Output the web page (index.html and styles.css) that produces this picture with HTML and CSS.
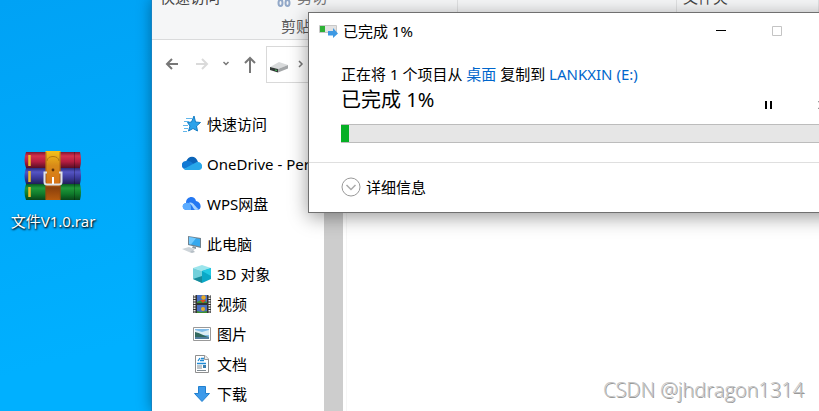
FILE: index.html
```html
<!DOCTYPE html>
<html lang="zh-CN">
<head>
<meta charset="utf-8">
<meta name="viewport" content="width=device-width, initial-scale=1">
<title>已完成 1%</title>
<link rel="stylesheet" href="styles.css">
</head>
<body>
<main class="desktop">
  <a class="shortcut" href="#rar">
    <svg class="shortcut-icon" width="58" height="50" viewBox="0 0 58 50" aria-hidden="true">
      <defs>
        <linearGradient id="red" x2="0" y2="1"><stop offset="0" stop-color="#7e1531"/><stop offset=".25" stop-color="#d5304c"/><stop offset=".6" stop-color="#b51d40"/><stop offset="1" stop-color="#580e25"/></linearGradient>
        <linearGradient id="blue" x2="0" y2="1"><stop offset="0" stop-color="#2c2c7c"/><stop offset=".25" stop-color="#5555c4"/><stop offset=".6" stop-color="#3c3a9c"/><stop offset="1" stop-color="#201f58"/></linearGradient>
        <linearGradient id="green" x2="0" y2="1"><stop offset="0" stop-color="#085b21"/><stop offset=".25" stop-color="#20993a"/><stop offset=".6" stop-color="#107c2c"/><stop offset="1" stop-color="#07461a"/></linearGradient>
        <linearGradient id="strap" x2="0" y2="1"><stop offset="0" stop-color="#f5c21b"/><stop offset=".3" stop-color="#d88a18"/><stop offset=".65" stop-color="#d87418"/><stop offset=".75" stop-color="#8b400c"/><stop offset="1" stop-color="#b75c0f"/></linearGradient>
      </defs>
      <path d="M2 1H56Q58 9 56 17H2Q-1 9 2 1Z" fill="url(#red)"/>
      <path d="M2 17H56Q58 25 56 33H2Q-1 25 2 17Z" fill="url(#blue)"/>
      <path d="M2 33H56Q58 41 56 49H2Q-1 41 2 33Z" fill="url(#green)"/>
      <path d="M5.500 4V15M5.500 20V31M5.500 36V46" stroke="#efbd2b" stroke-width="2.500"/>
      <path d="M50.500 1V49" stroke="#0004"/>
      <path d="M21.500 0H36.500V49H21.500Z" fill="url(#strap)"/>
      <path d="M22 1V48M36 1V48" stroke="#8d4a0f" stroke-opacity=".6"/>
      <path d="M23 10C23 4 35 4 35 10" fill="none" stroke="#b4770f"/>
      <circle cx="29" cy="19" r="1.4" fill="#62330a"/>
      <path d="M23 21.500H20.500V31Q20.500 33.500 23 33.500H35Q37.500 33.500 37.500 31V21.500H35" fill="none" stroke="#dfe3e8" stroke-width="2"/>
      <path d="M29 26V33" stroke="#fff" stroke-width="2"/>
    </svg>
    <span>文件V1.0.rar</span>
  </a>

  <section class="explorer" aria-label="文件资源管理器">
    <div class="ribbon">
      <div class="group group-clipboard">
        <div class="commands"><span class="pin">快速访问</span>
          <span class="cut"><svg width="14" height="20" viewBox="0 0 14 20" fill="none" stroke="#92a8c8" stroke-width="2" aria-hidden="true"><path d="M3 3L9.500 14M11 3L4.500 14"/><ellipse cx="3.500" cy="16" rx="2" ry="3"/><ellipse cx="10.500" cy="16" rx="2" ry="3"/></svg>剪切</span></div>
        <div class="group-name">剪贴板</div>
      </div>
      <div class="group group-organize"></div>
      <div class="group group-new"><div class="commands folder">文件夹</div></div>
    </div>

    <div class="toolbar">
      <button class="tool tool-back" aria-label="后退"><svg width="14" height="14" viewBox="0 0 14 14"><path d="M13 7H2M7 2L2 7L7 12"/></svg></button>
      <button class="tool tool-forward" aria-label="前进" disabled><svg width="14" height="14" viewBox="0 0 14 14"><path d="M1 7H12M7 2L12 7L7 12"/></svg></button>
      <button class="tool tool-recent" aria-label="最近浏览的位置"><svg width="8" height="14" viewBox="0 0 8 14"><path d="M1.500 5L4 7.500L6.500 5"/></svg></button>
      <button class="tool tool-up" aria-label="上移"><svg width="14" height="18" viewBox="0 0 14 18"><path d="M7 18V3M2 8L7 3L12 8"/></svg></button>
      <div class="address">
        <svg class="drive" width="19" height="12" viewBox="0 0 19 12" aria-hidden="true"><path d="M0 6L9 1L18 4L8 8Z" fill="#d8dadb"/><path d="M0 6L8 8V11.500L0 9Z" fill="#333a37"/><path d="M8 8L18 4V7.500L8 11.500Z" fill="#a3a6a8"/><path d="M5 8.500L7 9V10L5 9.500Z" fill="#42c45a"/></svg>
        <svg class="crumb" width="6" height="10" viewBox="0 0 6 10" aria-hidden="true"><path d="M1 2L4 5L1 8"/></svg>
      </div>
    </div>

    <div class="content">
      <nav class="tree" aria-label="导航窗格">
        <a class="root" href="#quick"><svg width="20" height="20" viewBox="0 0 20 20"><path d="M12 2L13.500 8L18.500 8.500L14.500 12L15.500 17L11 14.500L6.500 17L8 12L5.500 8.500L9.500 8Z" fill="#2ca2ea" stroke="#137cc4"/><path d="M4 4.500H10M2 7.500H7M1 11.500H6M2 14.500H6M1 17.500H5" stroke="#62b6ea"/></svg>快速访问</a>
        <a class="root" href="#onedrive"><svg width="20" height="20" viewBox="0 0 20 20"><path d="M4 8C6 1 14 1 16 8L10 12L1 14C-1 10 1 8 4 8Z" fill="#0b64b8"/><path d="M4 7C8 6 11 10 14 11L2 15C-2 12 0 7 4 7Z" fill="#1279d4"/><path d="M2 15L10 10.500L15 8C21 7 22 16 17 16H4C3 16 2 15.500 2 15Z" fill="#28a8ea"/></svg>OneDrive - Personal</a>
        <a class="root" href="#wps"><svg width="20" height="20" viewBox="0 0 20 20"><path d="M4 9C4 2 13 1 14 7C20 8 20 16 15 16H5C0 16 -1 10 4 9Z" fill="#2478f2"/><path d="M4 9C7 8 9 10 9 13V16H5C0 16-1 10 4 9Z" fill="#5cacff"/><path d="M7 9C11 7 13 13 17 15.500L14 16C11 16 11 11 7 9Z" fill="#a6d3ff"/></svg>WPS网盘</a>
        <a class="root" href="#pc"><svg width="20" height="20" viewBox="0 0 20 20"><path d="M6 2L19 4V14L6 11Z" fill="#708390"/><path d="M7 3L18 5V12.500L7 10Z" fill="#36a9ee"/><path d="M7 3L14 4.300L9 10.500L7 10Z" fill="#72caff"/><path d="M11 12L14 13V15L10 14Z" fill="#89979f"/><path d="M0 15L7 13L13 15.500L7 18Z" fill="#cdd4d9"/><path d="M7 18L11 16L13 18L10 19Z" fill="#b6bfc6"/></svg>此电脑</a>
        <a href="#objects"><svg width="20" height="20" viewBox="0 0 20 20"><path d="M1 4L10 1L19 4L10 7Z" fill="#9ce5ec"/><path d="M1 4L10 7V19L1 15Z" fill="#72d0db"/><path d="M19 4L10 7V19L19 15Z" fill="#0aa8c7"/><path d="M1 15L10 12V19Z" fill="#178b9b"/><path d="M10 7L19 4V12Z" fill="#22cae4"/></svg>3D 对象</a>
        <a href="#videos"><svg width="20" height="20" viewBox="0 0 20 20"><path d="M1 1H19V19H1Z" fill="#333"/><path d="M2.500 1V19M17.500 1V19" stroke="#eee" stroke-width="2" stroke-dasharray="1.500 1"/><path d="M5 1H15V9H5ZM5 11H15V19H5Z" fill="#4a6fc2"/><path d="M5 8L9 6L15 8V9H5Z" fill="#3f902f"/><circle cx="11.500" cy="3.500" r="2.200" fill="#e5a927"/><path d="M8 6H14L11 9Z" fill="#db4c21"/><circle cx="11" cy="15" r="2" fill="#e3ad2c"/><path d="M5 17L9 18L15 17V19H5Z" fill="#3f902f"/></svg>视频</a>
        <a href="#pictures"><svg width="20" height="20" viewBox="0 0 20 20"><path d="M1.500 3.500H18.500V16.500H1.500Z" fill="#fff" stroke="#999"/><path d="M3 5H17V15H3Z" fill="#81bce9"/><path d="M3 6L10 8L17 6V11H3Z" fill="#dcecf3"/><path d="M3 8C8 9 12 12 17 13V15H3Z" fill="#32685d"/><path d="M3 13H17V15H3Z" fill="#527d9d"/></svg>图片</a>
        <a href="#documents"><svg width="20" height="20" viewBox="0 0 20 20"><path d="M3.500 1.500H13L16.500 5V18.500H3.500Z" fill="#fff" stroke="#8f8f8f"/><path d="M12.500 1.500V5.500H16.500" fill="#eee" stroke="#999"/><path d="M8 4L6 7M9 4.500H12M8 6.500H12M5 9.500H14" stroke="#218bd5" stroke-width="1.300"/><path d="M5 12H10M5 14H10M5 16.500H14" stroke="#7f8b93"/><path d="M11 11H14V14H11Z" fill="#397dac"/></svg>文档</a>
        <a href="#downloads"><svg width="20" height="20" viewBox="0 0 20 20"><path d="M6.500 2.500H13.500V9.500H17.500L10 17.500L2.500 9.500H6.500Z" fill="#3d9aea" stroke="#2180cf"/></svg>下载</a>
      </nav>
      <div class="scrollbar"></div>
      <div class="files"></div>
    </div>
  </section>

  <section class="dialog" role="dialog" aria-labelledby="dialog-title">
    <header class="titlebar">
      <svg width="20" height="16" viewBox="0 0 20 16" aria-hidden="true"><path d="M.500 2.500H17.500V9.500H.500Z" fill="#e2e2e2" stroke="#c8c8c8"/><path d="M1 3H6V9H1Z" fill="#2eb135"/><path d="M9 8H14V5L19 10.500L14 15V12.500H9Z" fill="#3e99e3"/></svg>
      <h1 id="dialog-title">已完成 1%</h1>
      <button aria-label="最小化"><svg width="10" height="10" viewBox="0 0 10 10"><path d="M0 4.500H10" stroke="#000"/></svg></button>
      <button aria-label="最大化" disabled><svg width="10" height="10" viewBox="0 0 10 10"><path d="M.500 .500H9.500V9.500H.500Z" fill="none" stroke="#c4c4c4"/></svg></button>
      <button aria-label="关闭"><svg width="10" height="10" viewBox="0 0 10 10"><path d="M0 0L10 10M10 0L0 10" stroke="#000"/></svg></button>
    </header>
    <div class="copy">
      <p>正在将 1 个项目从 <a href="#desktop">桌面</a> 复制到 <a href="#drive">LANKXIN (E:)</a></p>
      <div class="status">
        <label for="copy-progress">已完成 1%</label>
        <button aria-label="暂停"><svg width="10" height="10" viewBox="0 0 10 10"><path d="M2 1V9M7 1V9" stroke="#000" stroke-width="2"/></svg></button>
        <button aria-label="取消"><svg width="10" height="10" viewBox="0 0 10 10"><path d="M1 1L9 9M9 1L1 9" stroke="#000" stroke-width="2"/></svg></button>
      </div>
      <progress id="copy-progress" value="1.6" max="100"></progress>
    </div>
    <footer>
      <button class="details"><svg width="20" height="20" viewBox="0 0 20 20" fill="none" aria-hidden="true"><circle cx="10" cy="10" r="9" stroke="#999"/><path d="M5.500 8L10 12.500L14.500 8" stroke="#aaa" stroke-width="1.500"/></svg>详细信息</button>
    </footer>
  </section>
  <div class="watermark">CSDN @jhdragon1314</div>
</main>
</body>
</html>
```
FILE: styles.css
```css
* { box-sizing: border-box; }

body {
  margin: 0;
  font: 15px/20px "Noto Sans", "Noto Sans CJK SC", sans-serif;
  color: #000;
}

button {
  display: flex;
  align-items: center;
  justify-content: center;
  padding: 0;
  border: 0;
  background: none;
  color: inherit;
  font: inherit;
}

a { color: inherit; text-decoration: none; }
svg { display: block; flex: none; }

.desktop {
  position: relative;
  height: 100vh;
  overflow: hidden;
  background: linear-gradient(165deg, #00a2f5, #00b0ff 60%);
}

.shortcut {
  position: absolute;
  top: 151px;
  left: 0;
  width: 106px;
  display: flex;
  flex-direction: column;
  align-items: center;
  gap: 10px;
  color: #fff;
  text-shadow: 1px 1px 2px #000, 0 1px 2px #0008;
}

/* File explorer window */
.explorer {
  position: absolute;
  inset: 0 0 0 152px;
  display: flex;
  flex-direction: column;
  background: #fff;
  box-shadow: 0 0 0 1px #1683c4, 0 0 14px #0006;
}

.ribbon {
  display: flex;
  height: 40px;
  overflow: hidden;
  border-bottom: 1px solid #dadbdc;
  background: #f5f6f7;
  color: #444;
}

.group { flex: none; border-right: 1px solid #e0e1e2; }
.group-clipboard { width: 306px; }
.group-organize { width: 219px; }
.group-new { flex: 1; }

.commands {
  display: flex;
  gap: 57px;
  margin-top: -13px;
  padding-left: 8px;
}

.cut { display: flex; gap: 6px; color: #777; }
.folder { padding-left: 6px; }
.group-name { padding: 9px 0 0 129px; color: #5a5a5a; }

.toolbar {
  display: flex;
  align-items: center;
  height: 48px;
  padding-left: 13px;
}

.tool svg { fill: none; stroke: #777; stroke-width: 2; }
.tool:disabled svg { stroke: #dadada; }
.tool-back { width: 14px; }
.tool-forward { width: 14px; margin-left: 16px; }
.tool-recent { width: 8px; margin-left: 13px; }
.tool-recent svg { stroke-width: 1.5; }
.tool-up { width: 14px; margin-left: 13px; }

.address {
  flex: 1;
  display: flex;
  align-items: center;
  gap: 9px;
  height: 37px;
  margin-left: 9px;
  padding-left: 3px;
  border: 1px solid #d9d9d9;
}

.drive { margin-top: 6px; }
.crumb { fill: none; stroke: #777; stroke-width: 1.5; }

.content { flex: 1; display: flex; min-height: 0; }

.tree {
  width: 172px;
  padding-top: 21px;
  overflow: hidden;
  white-space: nowrap;
}

.tree a {
  display: flex;
  align-items: center;
  gap: 5px;
  height: 30px;
  padding-left: 40px;
}

.tree .root { padding-left: 30px; }
.tree .root + .root { margin-top: 10px; }

.scrollbar { width: 19px; background: #cdcdcd; }
.files { flex: 1; margin-left: 3px; border-left: 1px solid #f6f6f6; }

/* Copy dialog; runs past the right edge of the desktop */
.dialog {
  position: absolute;
  top: 12px;
  left: 308px;
  right: -43px;
  border: 1px solid #707070;
  background: #fff;
  box-shadow: 0 4px 18px #0006;
}

.titlebar { display: flex; align-items: center; height: 35px; padding-left: 10px; }
.titlebar h1 { flex: 1; margin: 0 0 0 4px; font-size: 15px; font-weight: 400; }
.titlebar button { width: 56px; height: 34px; }

.copy {
  padding: 16px 11px 19px 32px;
  border-bottom: 1px solid #dfdfdf;
}

.copy p { margin: 0; }
.copy a { color: #0066cc; }
.status { display: flex; align-items: flex-end; height: 36px; }
.status label { flex: 1; align-self: flex-start; font-size: 20px; line-height: 32px; }
.status button { width: 54px; height: 30px; }

progress {
  display: block;
  width: 100%;
  height: 19px;
  margin-top: 4px;
  border: solid #bcbcbc;
  border-width: 1px 0;
  background: #e6e6e6;
  appearance: none;
}

progress::-webkit-progress-bar { background: #e6e6e6; }
progress::-webkit-progress-value { background: #06b025; }

footer { padding: 14px 32px 15px; }
.details { gap: 5px; }

.watermark {
  position: absolute;
  right: 15px;
  bottom: 8px;
  color: #c4c4c4;
  font-family: "Open Sans", sans-serif;
  font-size: 20px;
  font-weight: 300;
  line-height: 26px;
  text-shadow: 1px 1px 0 #999;
}
```
